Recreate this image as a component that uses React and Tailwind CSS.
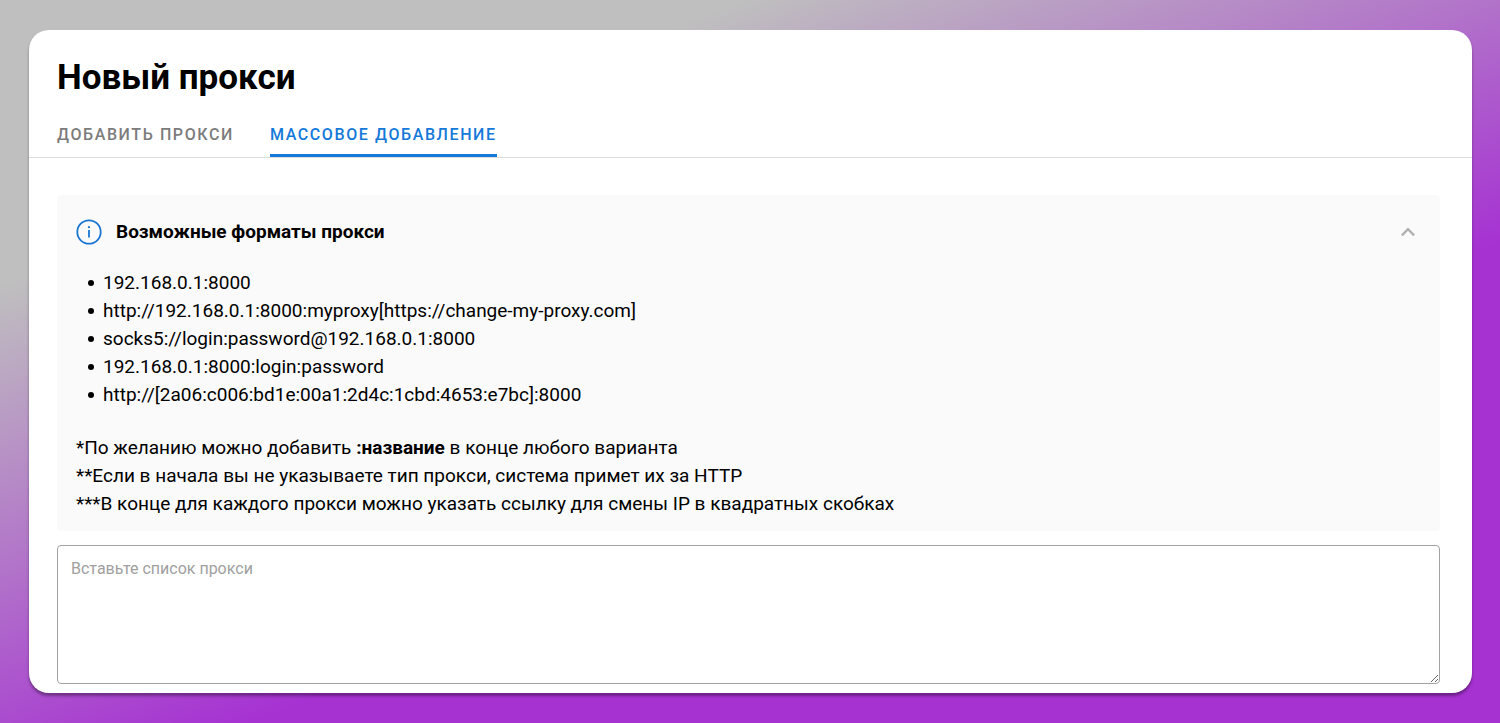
import { useState } from "react";

const tabs = ["Добавить прокси", "Массовое добавление"];

const formats = [
    "192.168.0.1:8000",
    "http://192.168.0.1:8000:myproxy[https://change-my-proxy.com]",
    "socks5://login:password@192.168.0.1:8000",
    "192.168.0.1:8000:login:password",
    "http://[2a06:c006:bd1e:00a1:2d4c:1cbd:4653:e7bc]:8000",
];

function InfoIcon() {
    return (
        <svg width="26" height="26" viewBox="0 0 26 26" fill="none" aria-hidden="true">
            <circle cx="13" cy="13" r="11.7" stroke="#1976d2" strokeWidth="1.8" />
            <path d="M13 11v7.4" stroke="#1976d2" strokeWidth="1.8" />
            <circle cx="13" cy="8.2" r="1.1" fill="#1976d2" />
        </svg>
    );
}

function ChevronIcon({ open }) {
    return (
        <svg width="16" height="10" viewBox="0 0 16 10" fill="none" className={open ? "" : "rotate-180"} aria-hidden="true">
            <path d="M1.9 8.3L8 2.2l6.1 6.1" stroke="#b0b0b0" strokeWidth="2.4" />
        </svg>
    );
}

export default function App() {
    const [activeTab, setActiveTab] = useState(1);
    const [open, setOpen] = useState(true);
    const [list, setList] = useState("");

    return (
        <div className="min-h-screen bg-[linear-gradient(159deg,#bfbfbf_22%,#a632d2_63%)] py-[30px] pr-7 pl-[29px] font-[Roboto,sans-serif] text-black">
            <main className="rounded-[20px] bg-white pt-[25px] pb-[9px] shadow-[0_3px_3px_rgba(0,0,0,0.35)]">
                <h1 className="px-7 text-[35px] leading-[46px] font-bold">Новый прокси</h1>
                <div role="tablist" className="mt-4 flex gap-9 border-b border-[#dcdcdc] px-7">
                    {tabs.map((tab, index) => (
                        <button
                            key={tab}
                            type="button"
                            role="tab"
                            aria-selected={index === activeTab}
                            onClick={() => setActiveTab(index)}
                            className={`cursor-pointer border-b-3 pt-1.5 pb-[7px] text-base leading-6 font-medium tracking-widest uppercase ${
                                index === activeTab ? "border-[#1479d9] text-[#1479d9]" : "border-transparent text-[#7c7c7c]"
                            }`}
                        >
                            {tab}
                        </button>
                    ))}
                </div>
                <div className="flex flex-col gap-[14px] pt-[37px] pr-8 pl-7">
                    <section className="rounded bg-[#fafafa] px-[19px] pt-[23px] pb-[13px]">
                        <button
                            type="button"
                            aria-expanded={open}
                            onClick={() => setOpen(!open)}
                            className="flex w-full cursor-pointer items-center gap-[14px] pr-[5px] text-left"
                        >
                            <InfoIcon />
                            <span className="flex-1 text-[19px] leading-7 font-bold">Возможные форматы прокси</span>
                            <ChevronIcon open={open} />
                        </button>
                        {open && (
                            <div className="pt-[23px] text-[19px] leading-7">
                                <ul className="pl-3">
                                    {formats.map((format) => (
                                        <li key={format} className="flex items-center gap-[9px] before:size-1.5 before:rounded-full before:bg-black">
                                            {format}
                                        </li>
                                    ))}
                                </ul>
                                <div className="pt-[25px]">
                                    <p>*По желанию можно добавить <b>:название</b> в конце любого варианта</p>
                                    <p>**Если в начала вы не указываете тип прокси, система примет их за HTTP</p>
                                    <p>***В конце для каждого прокси можно указать ссылку для смены IP в квадратных скобках</p>
                                </div>
                            </div>
                        )}
                    </section>
                    <textarea
                        aria-label="Вставьте список прокси"
                        placeholder="Вставьте список прокси"
                        value={list}
                        onChange={(e) => setList(e.target.value)}
                        className="block h-[139px] w-full rounded border border-[#a3a3a3] px-[13px] py-[11px] text-base leading-6 outline-none placeholder:text-[#a0a0a0]"
                    />
                </div>
            </main>
        </div>
    );
}
